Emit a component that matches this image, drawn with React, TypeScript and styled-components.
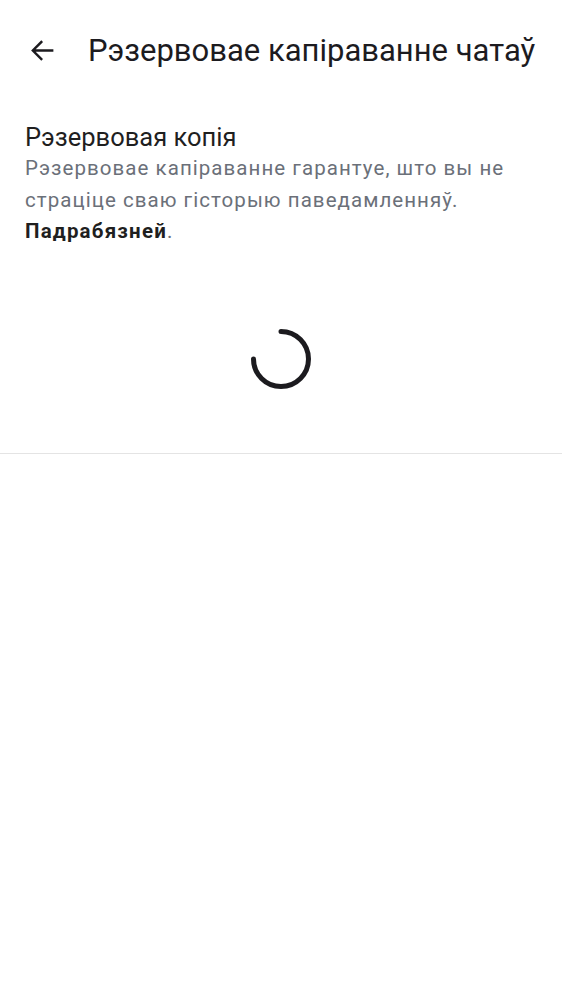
import React from "react";
import styled, { createGlobalStyle } from "styled-components";

const Global = createGlobalStyle`
  html, body { margin: 0; padding: 0; background: #ffffff; }
  body { font-family: Roboto, "Noto Sans", sans-serif; -webkit-font-smoothing: antialiased; }
`;

const Page = styled.div`
  width: 562px;
  min-height: 1000px;
  background: #fff;
  display: flex;
  flex-direction: column;
`;

const TopBar = styled.header`
  height: 100px;
  display: flex;
  align-items: center;
  padding: 0 0 0 26px;
  box-sizing: border-box;
  gap: 30px;
`;

const BackButton = styled.button`
  width: 32px;
  height: 32px;
  border: none;
  background: none;
  padding: 0;
  display: flex;
  align-items: center;
  justify-content: center;
  color: #1c1b1f;
`;

const Title = styled.h1`
  margin: 0;
  font-size: 31px;
  font-weight: 400;
  color: #1c1b1f;
  white-space: nowrap;
  letter-spacing: 0;
`;

const Section = styled.section`
  padding: 21px 25px 0;
`;

const SectionTitle = styled.div`
  font-size: 25.5px;
  line-height: 32px;
  color: #1f1f1f;
`;

const Description = styled.p`
  margin: 0;
  font-size: 20.5px;
  line-height: 31.5px;
  color: #6b7079;
  letter-spacing: 1.05px;
`;

const Strong = styled.span`
  font-weight: 700;
  color: #1f1f1f;
  letter-spacing: 1.2px;
`;

const SpinnerWrap = styled.div`
  display: flex;
  align-items: center;
  justify-content: center;
  padding: 79px 0 62px;
`;

const Divider = styled.hr`
  margin: 0;
  border: none;
  border-top: 1px solid #e4e4e4;
`;

export default function App() {
  return (
    <Page>
      <Global />
      <TopBar>
        <BackButton aria-label="back">
          <svg width="29" height="29" viewBox="0 0 24 24" fill="none">
            <path d="M20 12H4.5M11 5l-7 7 7 7" stroke="#1c1b1f" strokeWidth="2" strokeLinecap="square" strokeLinejoin="miter" />
          </svg>
        </BackButton>
        <Title>Рэзервовае капіраванне чатаў</Title>
      </TopBar>
      <Section>
        <SectionTitle>Рэзервовая копія</SectionTitle>
        <Description>
          Рэзервовае капіраванне гарантуе, што вы не страціце сваю гісторыю паведамленняў.{" "}
          <Strong>Падрабязней</Strong>.
        </Description>
      </Section>
      <SpinnerWrap>
        <svg width="64" height="64" viewBox="0 0 64 64">
          <path d="M32 4.5 A27.5 27.5 0 1 1 4.5 32" fill="none" stroke="#1c1b1f" strokeWidth="5" strokeLinecap="round" />
        </svg>
      </SpinnerWrap>
      <Divider />
    </Page>
  );
}
